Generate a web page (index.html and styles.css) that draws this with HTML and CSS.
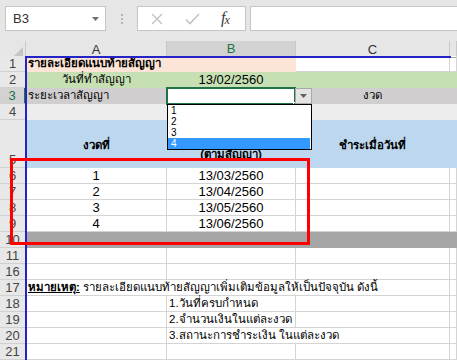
FILE: index.html
```html
<!DOCTYPE html>
<html lang="th">
<head>
<meta charset="utf-8">
<title>Excel</title>
<link rel="stylesheet" href="styles.css">
</head>
<body>
<div class="app">
  <div class="topbar">
    <div class="namebox">
      <span class="nb-text">B3</span>
      <svg class="nb-caret" width="7" height="4" viewBox="0 0 7 4"><path d="M0 0H7L3.5 4Z" fill="#707070"/></svg>
    </div>
    <div class="grip"><i></i><i></i><i></i></div>
    <div class="fbtns">
      <svg class="ic-x" width="12" height="12" viewBox="0 0 12 12"><path d="M1 1L11 11M11 1L1 11" stroke="#c2c2c2" stroke-width="1.4" fill="none"/></svg>
      <svg class="ic-ok" width="15" height="12" viewBox="0 0 15 12"><path d="M1 6.5L5 10.5L14 1" stroke="#c2c2c2" stroke-width="1.6" fill="none"/></svg>
      <span class="fx">f<span class="fx-x">x</span></span>
    </div>
    <div class="finput"></div>
  </div>

  <div class="colheads">
    <div class="corner"><svg width="9" height="9" viewBox="0 0 9 9"><path d="M9 0V9H0Z" fill="#c4c4c4"/></svg></div>
    <div class="ch">A</div>
    <div class="ch sel">B</div>
    <div class="ch">C</div>
    <div class="ch"></div>
  </div>

  <div class="sheet">
    <div class="row">
      <div class="rh">1</div>
      <div class="c span2 f-salmon b th">รายละเอียดแนบท้ายสัญญา</div>
      <div class="c"></div>
      <div class="c"></div>
    </div>
    <div class="row">
      <div class="rh">2</div>
      <div class="c f-green ctr th">วันที่ทำสัญญา</div>
      <div class="c f-green ctr">13/02/2560</div>
      <div class="c f-green"></div>
      <div class="c f-green"></div>
    </div>
    <div class="row">
      <div class="rh rsel">3</div>
      <div class="c f-gray th">ระยะเวลาสัญญา</div>
      <div class="c"></div>
      <div class="c f-gray ctr th">งวด</div>
      <div class="c f-gray"></div>
    </div>
    <div class="row">
      <div class="rh">4</div>
      <div class="c f-light"></div>
      <div class="c f-light"></div>
      <div class="c f-light"></div>
      <div class="c f-light"></div>
    </div>
    <div class="row tall">
      <div class="rh">5</div>
      <div class="c f-blue ctr b th">งวดที่</div>
      <div class="c f-blue ctr b two th">วันที่ครบกำหนด<br>(ตามสัญญา)</div>
      <div class="c f-blue ctr b th">ชำระเมื่อวันที่</div>
      <div class="c f-blue"></div>
    </div>
    <div class="row">
      <div class="rh">6</div>
      <div class="c ctr">1</div>
      <div class="c ctr">13/03/2560</div>
      <div class="c"></div>
      <div class="c"></div>
    </div>
    <div class="row">
      <div class="rh">7</div>
      <div class="c ctr">2</div>
      <div class="c ctr">13/04/2560</div>
      <div class="c"></div>
      <div class="c"></div>
    </div>
    <div class="row">
      <div class="rh">8</div>
      <div class="c ctr">3</div>
      <div class="c ctr">13/05/2560</div>
      <div class="c"></div>
      <div class="c"></div>
    </div>
    <div class="row">
      <div class="rh">9</div>
      <div class="c ctr">4</div>
      <div class="c ctr">13/06/2560</div>
      <div class="c"></div>
      <div class="c"></div>
    </div>
    <div class="row">
      <div class="rh">10</div>
      <div class="c f-dark"></div>
      <div class="c f-dark"></div>
      <div class="c f-dark"></div>
      <div class="c f-dark"></div>
    </div>
    <div class="row">
      <div class="rh">11</div>
      <div class="c"></div>
      <div class="c"></div>
      <div class="c"></div>
      <div class="c"></div>
    </div>
    <div class="row">
      <div class="rh">16</div>
      <div class="c"></div>
      <div class="c"></div>
      <div class="c"></div>
      <div class="c"></div>
    </div>
    <div class="row">
      <div class="rh">17</div>
      <div class="c span3 th"><span class="b u">หมายเหตุ:</span>&nbsp;รายละเอียดแนบท้ายสัญญาเพิ่มเติมข้อมูลให้เป็นปัจจุบัน ดังนี้</div>
      <div class="c"></div>
    </div>
    <div class="row">
      <div class="rh">18</div>
      <div class="c"></div>
      <div class="c th">1.วันที่ครบกำหนด</div>
      <div class="c"></div>
      <div class="c"></div>
    </div>
    <div class="row">
      <div class="rh">19</div>
      <div class="c"></div>
      <div class="c th">2.จำนวนเงินในแต่ละงวด</div>
      <div class="c"></div>
      <div class="c"></div>
    </div>
    <div class="row">
      <div class="rh">20</div>
      <div class="c"></div>
      <div class="c span2 th">3.สถานะการชำระเงิน ในแต่ละงวด</div>
      <div class="c"></div>
    </div>
    <div class="row">
      <div class="rh">21</div>
      <div class="c"></div>
      <div class="c"></div>
      <div class="c"></div>
      <div class="c"></div>
    </div>

    <div class="printarea"></div>
    <div class="selcell"><i class="handle"></i></div>
    <div class="ddbtn"><svg width="7" height="4" viewBox="0 0 7 4"><path d="M0 0H7L3.5 4Z" fill="#606060"/></svg></div>
    <ul class="ddlist">
      <li>1</li>
      <li>2</li>
      <li>3</li>
      <li class="hl">4</li>
    </ul>
    <div class="redbox"></div>
  </div>
</div>
</body>
</html>
```
FILE: styles.css
```css
* { box-sizing: border-box; }
html, body { margin: 0; padding: 0; }
body {
  width: 457px;
  height: 360px;
  overflow: hidden;
  background: #ffffff;
  font-family: "Liberation Sans", Tahoma, sans-serif;
  font-size: 13px;
  color: #000;
}
.app { width: 457px; height: 360px; overflow: hidden; }

/* formula bar */
.topbar {
  height: 41px;
  background: #e6e6e6;
  display: flex;
  align-items: flex-start;
  padding: 6px 0 0 5px;
}
.namebox {
  width: 101px;
  height: 25px;
  background: #fff;
  border: 1px solid #c6c6c6;
  display: flex;
  align-items: center;
  justify-content: space-between;
  padding: 0 6px 0 7px;
}
.nb-text { font-size: 13px; color: #333; }
.grip {
  width: 31px;
  height: 25px;
  display: flex;
  flex-direction: column;
  align-items: center;
  justify-content: center;
  gap: 2px;
}
.grip i { display: block; width: 2px; height: 2px; background: #b4b4b4; }
.fbtns {
  width: 109px;
  height: 25px;
  background: #fff;
  border: 1px solid #c6c6c6;
  display: flex;
  align-items: center;
  padding-left: 13px;
}
.ic-x { margin-right: 22px; }
.ic-ok { margin-right: 21px; }
.fx {
  font-family: "Liberation Serif", serif;
  font-style: italic;
  font-size: 16px;
  line-height: 16px;
  color: #3c3c3c;
  letter-spacing: -1px;
}
.fx-x { font-size: 12px; position: relative; top: 1px; }
.finput {
  flex: 1;
  height: 25px;
  margin-left: 4px;
  background: #fff;
  border: 1px solid #c6c6c6;
  border-right: none;
}

/* column headers */
.colheads {
  display: grid;
  grid-template-columns: 26px 141px 129px 154px 1fr;
  height: 15px;
  background: #e6e6e6;
}
.corner {
  display: flex;
  align-items: flex-end;
  justify-content: flex-end;
  padding: 0 2px 2px 0;
  border-right: 1px solid #c8c8c8;
}
.ch {
  display: flex;
  align-items: center;
  justify-content: center;
  border-right: 1px solid #c8c8c8;
  border-bottom: 1px solid #ababab;
  color: #333;
  font-size: 13px;
  line-height: 14px;
  padding-top: 1px;
}
.ch.sel {
  background: #d2d2d2;
  color: #217346;
  border-bottom: 2px solid #217346;
}

/* sheet */
.sheet { position: relative; }
.row {
  display: grid;
  grid-template-columns: 26px 141px 129px 154px 1fr;
  height: 16px;
}
.row.tall { height: 48px; }
.rh {
  background: #e8e8e8;
  border-right: 1px solid #c8c8c8;
  border-bottom: 1px solid #d0d0d0;
  color: #444;
  font-size: 13px;
  line-height: 15px;
  display: flex;
  align-items: flex-end;
  justify-content: center;
}
.rh.rsel {
  background: #d2d2d2;
  color: #217346;
  border-right: 2px solid #217346;
}
.c {
  border-right: 1px solid #d4d4d4;
  border-bottom: 1px solid #d4d4d4;
  display: flex;
  align-items: center;
  padding-left: 2px;
  white-space: nowrap;
  line-height: 15px;
  overflow: visible;
}
.c.th { font-size: 11.5px; }
.c.ctr { justify-content: center; padding-left: 0; }
.c.two { flex-direction: column; justify-content: center; text-align: center; line-height: 16px; padding-top: 4px; }
.span2 { grid-column: span 2; }
.span3 { grid-column: span 3; }
.b { font-weight: bold; }
.u { text-decoration: underline; }

.f-salmon { background: #fce4d6; border-color: transparent; }
.f-green { background: #c6e0b4; border-color: transparent; }
.f-gray { background: #d0cece; border-color: transparent; }
.f-light { background: #ededed; border-color: transparent; }
.f-blue { background: #bdd7ee; border-color: transparent; }
.f-dark { background: #a6a6a6; border-color: transparent; }
.row.tall .c { padding-top: 4px; }

/* overlays */
.printarea {
  position: absolute;
  left: 25px;
  top: 0;
  width: 426px;
  height: 304px;
  border-left: 2px solid #2323c8;
  border-top: 2px solid #2323c8;
  pointer-events: none;
}
.selcell {
  position: absolute;
  left: 166px;
  top: 31px;
  width: 130px;
  height: 18px;
  border: 2px solid #217346;
}
.handle {
  position: absolute;
  right: -4px;
  bottom: -4px;
  width: 5px;
  height: 5px;
  background: #217346;
  border: 1px solid #fff;
}
.ddbtn {
  position: absolute;
  left: 295px;
  top: 32px;
  width: 17px;
  height: 16px;
  background: #e4e4e4;
  border: 1px solid #a8a8a8;
  display: flex;
  align-items: center;
  justify-content: center;
}
.ddlist {
  position: absolute;
  left: 167px;
  top: 48px;
  width: 145px;
  margin: 0;
  padding: 0;
  list-style: none;
  background: #fff;
  border: 1px solid #000;
  font-family: Tahoma, "Liberation Sans", sans-serif;
  font-size: 10px;
}
.ddlist li {
  height: 11px;
  line-height: 11px;
  padding-left: 3px;
  margin-right: 1px;
}
.ddlist li.hl { background: #3399ff; color: #fff; }
.redbox {
  position: absolute;
  left: 10px;
  top: 102px;
  width: 300px;
  height: 87px;
  border: 3px solid #ff0000;
  pointer-events: none;
}
```
